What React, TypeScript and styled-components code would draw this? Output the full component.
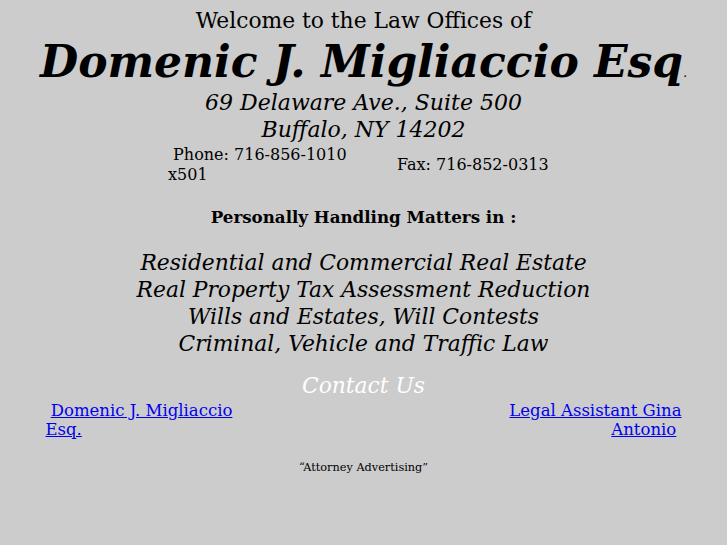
import React from 'react';
import styled, { createGlobalStyle } from 'styled-components';

const GlobalStyle = createGlobalStyle`
  html, body {
    margin: 0;
    padding: 0;
    background: #cccccc;
  }
  body {
    font-family: 'DejaVu Serif', serif;
    color: #000;
  }
`;

const practiceAreas = [
  'Residential and Commercial Real Estate',
  'Real Property Tax Assessment Reduction',
  'Wills and Estates, Will Contests',
  'Criminal, Vehicle and Traffic Law',
];

const App = () => {
  return (
    <Page>
      <GlobalStyle />
      <Welcome>Welcome to the Law Offices of</Welcome>
      <Name>
        Domenic J. Migliaccio Esq<Dot>.</Dot>
      </Name>
      <Address>69 Delaware Ave., Suite 500</Address>
      <Address>Buffalo, NY 14202</Address>

      <ContactRow>
        <PhoneCell>&nbsp;Phone: 716-856-1010 x501</PhoneCell>
        <FaxCell>Fax: 716-852-0313</FaxCell>
      </ContactRow>

      <Handling>Personally Handling Matters in :</Handling>

      <Practice>
        {practiceAreas.map((area) => (
          <PracticeLine key={area}>{area}</PracticeLine>
        ))}
      </Practice>

      <ContactUs>Contact Us</ContactUs>

      <LinkRow>
        <LinkCell $align="left">
          &nbsp;<Link href="#">Domenic J. Migliaccio Esq.</Link>
        </LinkCell>
        <LinkCell $align="right">
          <Link href="#">Legal Assistant Gina Antonio</Link>&nbsp;
        </LinkCell>
      </LinkRow>

      <Disclaimer>“Attorney Advertising”</Disclaimer>
    </Page>
  );
};

export default App;

const Page = styled.div`
  width: 727px;
  min-height: 545px;
  display: flex;
  flex-direction: column;
  align-items: center;
  padding-top: 8px;
  box-sizing: border-box;
`;

const Welcome = styled.div`
  font-size: 21.8px;
  line-height: 26px;
`;

const Name = styled.div`
  font-weight: bold;
  font-style: italic;
  font-size: 44px;
  line-height: 42px;
  margin-top: 7px;
  margin-bottom: -5px;
`;

const Dot = styled.span`
  font-size: 12px;
  font-weight: normal;
`;

const Address = styled.div`
  font-style: italic;
  font-size: 22px;
  line-height: 27px;
`;

const ContactRow = styled.div`
  display: grid;
  grid-template-columns: 203px 200px;
  align-items: center;
  margin-top: 2px;
  margin-left: 10px;
`;

const PhoneCell = styled.div`
  font-size: 16px;
  line-height: 20px;
  padding-left: 1px;
  padding-right: 4px;
`;

const FaxCell = styled.div`
  font-size: 16px;
  line-height: 20px;
  padding-left: 27px;
`;

const Handling = styled.div`
  font-weight: bold;
  font-size: 16.7px;
  line-height: 20px;
  margin-top: 22px;
`;

const Practice = styled.div`
  margin-top: 22px;
  display: flex;
  flex-direction: column;
  align-items: center;
`;

const PracticeLine = styled.div`
  font-style: italic;
  font-size: 21.8px;
  line-height: 27px;
`;

const ContactUs = styled.div`
  font-style: italic;
  font-size: 21.8px;
  line-height: 28px;
  color: #ffffff;
  margin-top: 15px;
`;

const LinkRow = styled.div`
  width: 636px;
  display: flex;
  justify-content: space-between;
  margin-top: 1px;
`;

const LinkCell = styled.div<{ $align: 'left' | 'right' }>`
  width: 195px;
  text-align: ${(p) => p.$align};
  font-size: 16.5px;
  line-height: 19px;
`;

const Link = styled.a`
  color: #0000ee;
  text-decoration: underline;
`;

const Disclaimer = styled.div`
  font-size: 11.3px;
  line-height: 16px;
  margin-top: 21px;
`;
